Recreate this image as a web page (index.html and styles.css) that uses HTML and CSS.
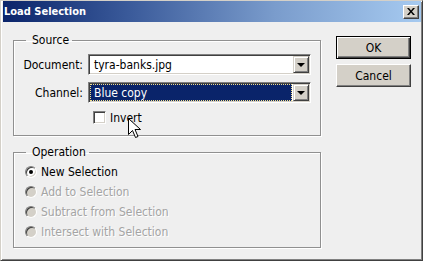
FILE: index.html
```html
<!DOCTYPE html>
<html lang="en">
<head>
  <meta charset="UTF-8" />
  <title>Load Selection</title>
  <link rel="stylesheet" href="styles.css">
</head>
<body>
  <div class="window">
    <div class="titlebar">
      <span class="title">Load Selection</span>
      <span class="close">
        <svg width="8" height="7" viewBox="0 0 8 7">
          <path d="M0 0h2l2 2.5L6 0h2L5 3.5 8 7H6L4 4.5 2 7H0l3-3.5z" fill="#000"/>
        </svg>
      </span>
    </div>

    <div class="content">
      <div class="groups">
        <!-- Source -->
        <fieldset class="group">
          <legend>Source</legend>
          <div class="form">
            <label>Document:</label>
            <div class="combo">
              <span class="field">tyra-banks.jpg</span>
              <span class="drop"><span class="arrow"></span></span>
            </div>
            <label>Channel:</label>
            <div class="combo">
              <span class="field selected">Blue copy</span>
              <span class="drop"><span class="arrow"></span></span>
            </div>
            <div class="check-row">
              <span class="checkbox"></span>
              <span>Invert</span>
            </div>
          </div>
        </fieldset>

        <!-- Operation -->
        <fieldset class="group operation">
          <legend>Operation</legend>
          <div class="radios">
            <div class="radio-row"><span class="radio checked"></span>New Selection</div>
            <div class="radio-row disabled"><span class="radio"></span>Add to Selection</div>
            <div class="radio-row disabled"><span class="radio"></span>Subtract from Selection</div>
            <div class="radio-row disabled"><span class="radio"></span>Intersect with Selection</div>
          </div>
        </fieldset>
      </div>

      <div class="buttons">
        <div class="button default"><span>OK</span></div>
        <div class="button"><span>Cancel</span></div>
      </div>
    </div>

    <!-- mouse pointer over the Invert label -->
    <svg class="cursor" width="13" height="21" viewBox="0 0 13 21">
      <path d="M0.5 0.5V16.5L4.5 12.5L7.5 19.5L10 18.5L7 11.5H12.5Z" fill="#fff" stroke="#000" stroke-width="1"/>
    </svg>
  </div>
</body>
</html>
```

FILE: styles.css
```css
* {
  box-sizing: border-box;
}

body {
  margin: 0;
  font-family: "DejaVu Sans Condensed", "DejaVu Sans", "Liberation Sans", sans-serif;
  font-stretch: condensed;
  font-size: 12px;
  color: #000;
}

.window {
  position: relative;
  width: 423px;
  height: 261px;
  background: #efefef;
  border: 1px solid;
  border-color: #d4d0c8 #404040 #404040 #d4d0c8;
  box-shadow: inset 1px 1px #fff, inset -1px -1px #808080;
  padding: 0 1px 0 2px;
}

/* title bar */
.titlebar {
  height: 21px;
  display: flex;
  align-items: center;
  justify-content: space-between;
  padding: 0 2px 0 1px;
  background: linear-gradient(to right, #0a246a, #3a5a9a 30%, #7a9ccc 65%, #a6caf0);
}

.title {
  color: #fff;
  font-weight: bold;
  font-size: 11px;
}

.close {
  width: 16px;
  height: 14px;
  display: flex;
  align-items: center;
  justify-content: center;
  background: #d4d0c8;
  border: 1px solid;
  border-color: #fff #404040 #404040 #fff;
  box-shadow: inset -1px -1px #808080;
}

/* body */
.content {
  display: flex;
  align-items: flex-start;
  padding-left: 10px;
}

.groups {
  width: 308px;
  padding-top: 11px;
}

.group {
  margin: 0;
  padding: 0;
  border: 1px solid #909090;
  box-shadow: 1px 1px #fff, inset 1px 1px #fff;
}

.group legend {
  margin-left: 12px;
  padding: 0 3px 0 6px;
  line-height: 14px;
}

.operation {
  margin-top: 9px;
}

.form {
  display: grid;
  grid-template-columns: 69px 223px;
  column-gap: 5px;
  row-gap: 7px;
  padding: 7px 0 9px;
}

.form label {
  text-align: right;
  align-self: center;
}

.combo {
  height: 21px;
  display: flex;
  border: 1px solid;
  border-color: #808080 #fff #fff #808080;
  box-shadow: inset 1px 1px #404040, inset -1px -1px #d4d0c8;
  padding: 1px;
  background: #fff;
}

.field {
  flex: 1;
  display: flex;
  align-items: center;
  padding-left: 4px;
  margin-right: 1px;
}

.field.selected {
  background: #0a246a;
  color: #fff;
  border: 1px dotted #f3e08a;
  padding-left: 3px;
}

.drop {
  width: 16px;
  display: flex;
  align-items: center;
  justify-content: center;
  background: #d4d0c8;
  border: 1px solid;
  border-color: #d4d0c8 #404040 #404040 #d4d0c8;
  box-shadow: inset 1px 1px #fff, inset -1px -1px #808080;
}

.arrow {
  width: 0;
  height: 0;
  border-left: 4px solid transparent;
  border-right: 4px solid transparent;
  border-top: 4px solid #000;
}

.check-row {
  grid-column: 2;
  display: flex;
  align-items: center;
  gap: 4px;
  height: 17px;
  margin-top: -1px;
  margin-left: 5px;
}

.checkbox {
  width: 13px;
  height: 13px;
  background: #fff;
  border: 1px solid;
  border-color: #808080 #fff #fff #808080;
  box-shadow: inset 1px 1px #404040, inset -1px -1px #d4d0c8;
}

.radios {
  padding: 3px 0 5px 11px;
}

.radio-row {
  height: 20px;
  display: flex;
  align-items: center;
  gap: 4px;
}

.radio {
  position: relative;
  width: 12px;
  height: 12px;
  border-radius: 50%;
  background: #fff;
  border: 1px solid;
  border-color: #808080 #fff #fff #808080;
  box-shadow: inset 1px 1px #404040, inset -1px -1px #d4d0c8;
}

.radio.checked::after {
  content: "";
  position: absolute;
  left: 3px;
  top: 3px;
  width: 4px;
  height: 4px;
  border-radius: 50%;
  background: #000;
}

.radio-row.disabled {
  color: #a4a4a4;
  text-shadow: 1px 1px #fff;
}

.radio-row.disabled .radio {
  background: #d4d0c8;
}

/* buttons */
.buttons {
  display: flex;
  flex-direction: column;
  gap: 5px;
  margin: 14px 0 0 15px;
}

.button {
  width: 75px;
  height: 23px;
  background: #d4d0c8;
  border: 1px solid;
  border-color: #fff #404040 #404040 #fff;
  box-shadow: inset -1px -1px #808080;
  display: flex;
  align-items: center;
  justify-content: center;
}

.button.default {
  border: 1px solid #000;
  box-shadow: inset 1px 1px #fff, inset -1px -1px #404040, inset -2px -2px #808080;
}

.cursor {
  position: absolute;
  left: 127px;
  top: 117px;
}
```
